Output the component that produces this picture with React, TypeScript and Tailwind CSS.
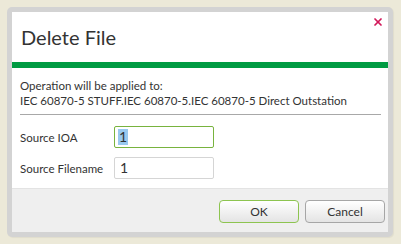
import { X } from 'lucide-react';

export default function App() {
    return (
        <div
            className="w-[401px] h-[244px] bg-[#ece9d8] pt-[7px] pl-[7px]"
            style={{ fontFamily: '"Lato", "Liberation Sans", sans-serif' }}
        >
            {/* Cadre gris de la fenêtre */}
            <div className="w-[386px] h-[230px] bg-[#d3d3d3] rounded-[5px] p-[5px] shadow-[1px_1px_1px_rgba(0,0,0,0.05)]">
                <div className="h-full bg-white flex flex-col">
                    {/* En-tête */}
                    <div className="h-[50px] relative flex items-center pl-[9px]">
                        <h1 className="text-[20px] text-[#333333] leading-none">Delete File</h1>
                        <X className="absolute right-[4px] top-[4px] w-[12px] h-[12px] text-[#d2185a]" strokeWidth={3.5} />
                    </div>
                    <div className="h-[6px] bg-[#009b43]" />

                    {/* Contenu */}
                    <div className="flex-1 pl-[8px] pr-[7px] pt-[10px] text-[11.5px] leading-[15px] text-[#333333]">
                        <p>Operation will be applied to:</p>
                        <p>IEC 60870-5 STUFF.IEC 60870-5.IEC 60870-5 Direct Outstation</p>
                        <div className="h-px bg-[#a8a8a8] mt-[6px]" />

                        <div className="flex items-center mt-[11px] h-[22px]">
                            <span className="w-[94px]">Source IOA</span>
                            <div className="w-[100px] h-[22px] border-[1.5px] border-[#78b33e] rounded-[2px] flex items-center pl-[3px]">
                                <span className="bg-[#99c9ef] text-[14px] leading-[16px] px-[1px]">1</span>
                            </div>
                        </div>
                        <div className="flex items-center mt-[9px] h-[22px]">
                            <span className="w-[94px]">Source Filename</span>
                            <div className="w-[100px] h-[22px] border border-[#d5d5d5] rounded-[2px] flex items-center pl-[5px]">
                                <span className="text-[14px] leading-[16px]">1</span>
                            </div>
                        </div>
                    </div>

                    {/* Pied avec boutons */}
                    <div className="h-[44px] border-t border-[#e3e3e3] bg-[#efefef] flex justify-end items-start pt-[11px] pr-[3px] gap-[6px]">
                        <button className="w-[80px] h-[23px] rounded-[4px] border border-[#8dc450] bg-gradient-to-b from-white to-[#e4e4e4] text-[12px] text-[#333333]">
                            OK
                        </button>
                        <button className="w-[80px] h-[23px] rounded-[4px] border border-[#a6a6a6] bg-gradient-to-b from-white to-[#e4e4e4] text-[12px] text-[#333333]">
                            Cancel
                        </button>
                    </div>
                </div>
            </div>
        </div>
    );
}
